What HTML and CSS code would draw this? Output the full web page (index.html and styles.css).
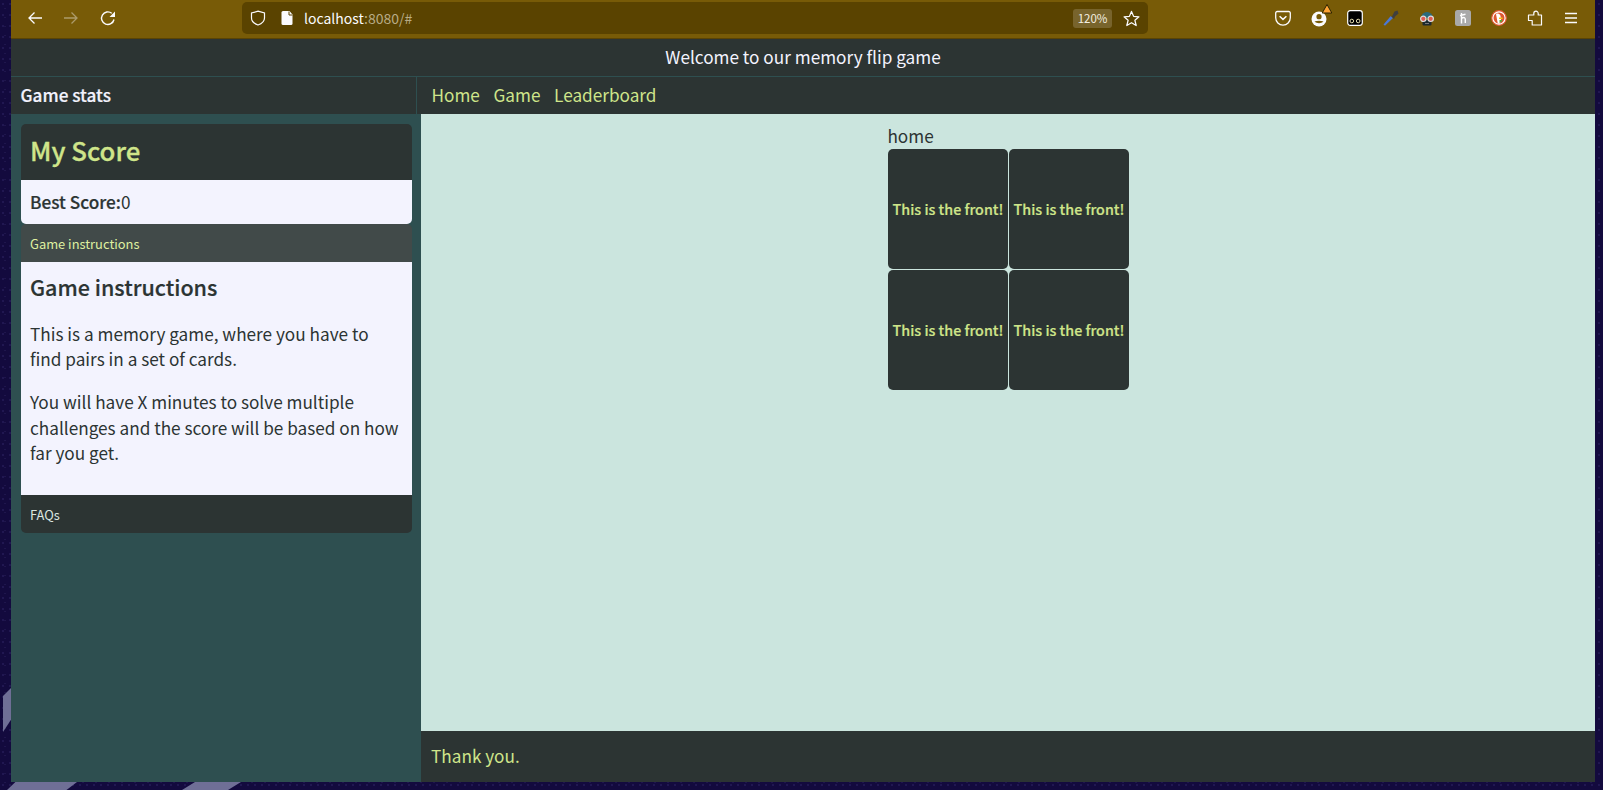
FILE: index.html
```html
<!DOCTYPE html>
<html lang="en">
<head>
<meta charset="utf-8">
<title>Memory flip game</title>
<link rel="stylesheet" href="styles.css">
</head>
<body>
<div class="stripe stripe-left"></div>
<div class="stripe stripe-b1"></div>
<div class="stripe stripe-b2"></div>
<div class="window">
  <div class="toolbar">
    <div class="nav-icons">
      <svg class="ic" viewBox="0 0 16 16"><path d="M15 8H2M7.500 2.500 2 8l5.500 5.500" fill="none" stroke="#fbfbfe" stroke-width="1.300"/></svg>
      <svg class="ic dim" viewBox="0 0 16 16"><path d="M1 8H14M8.500 2.500 14 8l-5.500 5.500" fill="none" stroke="#fbfbfe" stroke-width="1.300"/></svg>
      <svg class="ic reload" viewBox="0 0 16 16"><path d="M14 9.500A6.300 6.300 0 1 1 11.800 3.300" fill="none" stroke="#fbfbfe" stroke-width="1.400"/><path d="M15 1.500v5.500H9.500z" fill="#fbfbfe"/></svg>
    </div>
    <div class="urlbar">
      <svg class="ic shield" viewBox="0 0 16 16"><path d="M8 1.200 14.500 3v5c0 3.500-2.800 5.700-6.500 7-3.700-1.300-6.500-3.500-6.500-7V3z" fill="none" stroke="#fbfbfe" stroke-width="1.200"/></svg>
      <svg class="ic page" viewBox="0 0 16 16"><path d="M2.500 2.500A1.500 1.500 0 0 1 4 1h6.500l3 3.500v9A1.500 1.500 0 0 1 12 15H4a1.500 1.500 0 0 1-1.500-1.500z" fill="#fbfbfe"/><path d="M10 1.500v3.500h3.500" fill="none" stroke="#5a4300" stroke-width="1"/></svg>
      <span class="url"><span class="host">localhost</span>:8080/#</span>
      <span class="zoom-pill">120%</span>
      <svg class="ic star" viewBox="0 0 16 16"><path d="M8 1.300 10 6l5 .4-3.800 3.300 1.200 4.900L8 12l-4.400 2.600 1.200-4.900L1 6.400 6 6z" fill="none" stroke="#fbfbfe" stroke-width="1.200" stroke-linejoin="round"/></svg>
    </div>
    <div class="ext-icons">
      <svg class="ic" viewBox="0 0 16 16"><path d="M2.200 1.500h11.600a1.500 1.500 0 0 1 1.500 1.500v4.800a7.300 7.300 0 0 1-14.600 0V3a1.500 1.500 0 0 1 1.500-1.500z" fill="none" stroke="#fbfbfe" stroke-width="1.300"/><path d="m4.600 6.200 3.400 3.200 3.400-3.200" fill="none" stroke="#fbfbfe" stroke-width="1.500"/></svg>
      <svg class="ic over" viewBox="0 0 16 16"><circle cx="8" cy="9" r="7.500" fill="#fbfbfe"/><circle cx="8" cy="6.700" r="2.600" fill="#785b07"/><path d="M3.500 11.500c2.500 2.300 6.500 2.300 9 0-2.500-1-6.500-1-9 0z" fill="#785b07"/><path d="M16 -5.500 20.800 3H11.200z" fill="#ffa436" stroke="#2c2300" stroke-width="1" stroke-linejoin="round"/></svg>
      <svg class="ic" viewBox="0 0 16 16"><rect x=".7" y=".7" width="14.600" height="14.600" rx="2.500" fill="#000" stroke="#fff" stroke-width="1.200"/><circle cx="4.800" cy="11" r="1.800" fill="none" stroke="#e8e0b0" stroke-width="1"/><circle cx="11.200" cy="11" r="1.800" fill="none" stroke="#e8e0b0" stroke-width="1"/></svg>
      <svg class="ic" viewBox="0 0 16 16"><path d="M.500 14.500 2 15.800 10 8 7.800 6z" fill="#4a78d8"/><path d="M7.500 5.500 9 6.500 11.500 1.500 14.500 .5 15.500 3.500 12 6.500 11 9z" fill="#3f3f3f"/></svg>
      <svg class="ic" viewBox="0 0 16 16"><path d="M2 8a6 6 0 0 1 12 0z" fill="#2b6a7c"/><rect x="3.500" y="10" width="9" height="5.500" rx="1" fill="#1d2a30"/><path d="M6 13.500h4" stroke="#777" stroke-width="1"/><circle cx="4.300" cy="8.800" r="2.700" fill="#e05a50" stroke="#ddd" stroke-width="1.200"/><circle cx="11.700" cy="8.800" r="2.700" fill="#e05a50" stroke="#ddd" stroke-width="1.200"/></svg>
      <svg class="ic" viewBox="0 0 16 16"><rect width="16" height="16" rx="2.500" fill="#a9a9a9"/><path d="M6.500 3v10.500M5 5.500l5.500-1.300M6.500 8.500c2.500-1.800 3.800-1 3.800 1v3.500" fill="none" stroke="#fff" stroke-width="1.400"/></svg>
      <svg class="ic" viewBox="0 0 16 16"><circle cx="8" cy="8" r="7.300" fill="#fff" stroke="#de5833" stroke-width="1.200"/><circle cx="8" cy="8" r="5.500" fill="#de5833"/><path d="M5 4c2.300-1.300 4.500.3 4.700 3l.3 3-1 3.400H6.800L6 9.500z" fill="#fff"/><path d="M8.500 10h3l-1 1.800-2 1.200z" fill="#5ba83a"/><path d="M8 7.500h3.500V9H8z" fill="#f5c518"/></svg>
      <svg class="ic" viewBox="0 0 16 16"><path d="M1.500 5H6.800V3.400a2.200 2.200 0 0 1 4.400 0V5h3.300v10H5.200v-4.500H1.500z" fill="none" stroke="#fbfbfe" stroke-width="1.200" stroke-linejoin="round"/></svg>
      <svg class="ic" viewBox="0 0 16 16"><path d="M2 3.500h12M2 8h12M2 12.500h12" stroke="#fbfbfe" stroke-width="1.300"/></svg>
    </div>
  </div>
  <header class="welcome">Welcome to our memory flip game</header>
  <div class="navrow">
    <div class="stats-title">Game stats</div>
    <nav class="nav">
      <a href="#">Home</a>
      <a href="#">Game</a>
      <a href="#">Leaderboard</a>
    </nav>
  </div>
  <div class="content">
    <aside class="sidebar">
      <div class="score-card">
        <div class="score-head">My Score</div>
        <div class="score-body"><strong>Best Score:</strong>0</div>
      </div>
      <div class="accordion">
        <div class="acc-head acc-open">Game instructions</div>
        <div class="acc-body">
          <h2>Game instructions</h2>
          <p>This is a memory game, where you have to find pairs in a set of cards.</p>
          <p>You will have X minutes to solve multiple challenges and the score will be based on how far you get.</p>
        </div>
        <div class="acc-head acc-last">FAQs</div>
      </div>
    </aside>
    <div class="main-col">
      <main class="main">
        <div class="board">
          <div class="home-label">home</div>
          <div class="grid">
            <div class="card">This is the front!</div>
            <div class="card">This is the front!</div>
            <div class="card">This is the front!</div>
            <div class="card">This is the front!</div>
          </div>
        </div>
      </main>
      <footer class="footer">Thank you.</footer>
    </div>
  </div>
</div>
</body>
</html>
```
FILE: styles.css
```css
* { box-sizing: border-box; }
html, body { height: 100%; }
body {
  margin: 0;
  height: 790px;
  overflow: hidden;
  position: relative;
  background-color: #130a3e;
  background-image:
    radial-gradient(circle at 3px 4px, #241a55 0.6px, transparent 1.2px),
    radial-gradient(circle at 5px 9px, #221850 0.6px, transparent 1.2px);
  background-size: 7px 11px, 13px 9px;
  font-family: "Noto Sans CJK SC", "Noto Sans", sans-serif;
  color: #2c3433;
}
.stripe { position: absolute; background: #6f6f96; }
.stripe-left { left: 3px; top: 688px; width: 8px; height: 44px; clip-path: polygon(0 18%, 100% 0, 100% 72%, 0 100%); }
.stripe-b1 { left: 7px; top: 782px; width: 70px; height: 8px; clip-path: polygon(12% 0, 100% 0, 85% 100%, 0 100%); }
.stripe-b2 { left: 182px; top: 782px; width: 59px; height: 8px; clip-path: polygon(22% 0, 100% 0, 78% 100%, 0 100%); }
.window {
  position: relative;
  margin-left: 11px;
  width: 1584px;
  height: 782px;
  display: flex;
  flex-direction: column;
  background: #2c3433;
}
.toolbar {
  height: 39px;
  flex: none;
  display: flex;
  align-items: center;
  padding-bottom: 2px;
  background: #785b07;
  border-bottom: 1px solid #5a4405;
}
.ic { display: block; width: 16px; height: 16px; flex: none; }
.over { overflow: visible; }
.dim { opacity: 0.4; }
.reload { margin-left: 1px; }
.nav-icons { display: flex; gap: 20px; padding-left: 16px; width: 231px; }
.urlbar {
  width: 906px;
  height: 32px;
  display: flex;
  align-items: center;
  background: #5a4300;
  border-radius: 5px;
  padding-left: 8px;
  font-size: 14px;
  color: #b8ab86;
}
.page { margin-left: 13px; }
.url { margin-left: 9px; }
.host { color: #fbfbfe; }
.zoom-pill {
  margin-left: auto;
  width: 39px;
  height: 19px;
  border-radius: 3px;
  background: #78642c;
  color: #f2eee0;
  font-size: 11.500px;
  line-height: 19px;
  text-align: center;
}
.star { margin: 0 8px 0 11px; width: 17px; height: 17px; }
.ext-icons {
  display: flex;
  align-items: center;
  gap: 20px;
  margin-left: 127px;
}
.welcome {
  flex: none;
  height: 38px;
  border-bottom: 1px solid #2e4f50;
  color: #f3f3fe;
  font-size: 17.200px;
  line-height: 35px;
  text-align: center;
}
.navrow { flex: none; height: 37px; display: flex; }
.stats-title {
  width: 406px;
  flex: none;
  border-right: 1px solid #2e4f50;
  padding-left: 9.500px;
  color: #f3f3fe;
  font-size: 17.200px;
  font-weight: 500;
  -webkit-text-stroke: 0.2px currentColor;
  line-height: 35px;
}
.nav { display: flex; gap: 13.600px; padding-left: 14.500px; font-size: 17.200px; line-height: 35px; }
.nav a { color: #cfe58a; text-decoration: none; }
.content { flex: 1; min-height: 0; display: flex; }
.sidebar {
  width: 410px;
  flex: none;
  background: #2e4f50;
  padding: 10px 9px 0 10px;
}
.score-card { border-radius: 5px; overflow: hidden; }
.score-head {
  height: 56px;
  padding-left: 9px;
  background: #2c3433;
  color: #cfe58a;
  font-size: 25.800px;
  font-weight: 500;
  -webkit-text-stroke: 0.3px currentColor;
  line-height: 52px;
}
.score-body {
  height: 44px;
  padding-left: 9px;
  background: #f3f3fe;
  font-size: 17.200px;
  line-height: 43px;
}
.score-body strong { font-weight: 500; -webkit-text-stroke: 0.2px currentColor; }
.accordion { border-radius: 5px; overflow: hidden; }
.acc-head {
  height: 38px;
  padding-left: 9px;
  font-size: 12.900px;
  line-height: 39px;
  background: #2c3433;
  color: #dbe6e0;
}
.acc-open { background: #414a49; color: #dff0a0; }
.acc-body {
  height: 233px;
  padding: 10px 9px 0;
  background: #f3f3fe;
  font-size: 17.200px;
  line-height: 25.500px;
}
.acc-body h2 { margin: 0 0 18.500px; font-size: 21.500px; font-weight: 500; -webkit-text-stroke: 0.2px currentColor; line-height: 30px; }
.acc-body p { margin: 0 0 17.800px; }
.main-col { flex: 1; min-width: 0; display: flex; flex-direction: column; }
.main { flex: 1; min-height: 0; background: #cbe5de; display: flex; justify-content: center; }
.board { width: 241px; padding-top: 8px; margin-left: 1px; }
.home-label { font-size: 17.200px; line-height: 27px; margin-left: -0.600px; }
.grid { display: grid; grid-template-columns: 120px 120px; grid-auto-rows: 120px; gap: 1px; }
.card {
  background: #2c3433;
  border-radius: 5px;
  padding-bottom: 2px;
  color: #cfe58a;
  font-size: 14.300px;
  font-weight: 500;
  -webkit-text-stroke: 0.2px currentColor;
  display: flex;
  align-items: center;
  justify-content: center;
  white-space: nowrap;
}
.footer {
  flex: none;
  height: 51px;
  padding-left: 10px;
  background: #2c3433;
  color: #cfe58a;
  font-size: 17.200px;
  line-height: 49px;
}
```
